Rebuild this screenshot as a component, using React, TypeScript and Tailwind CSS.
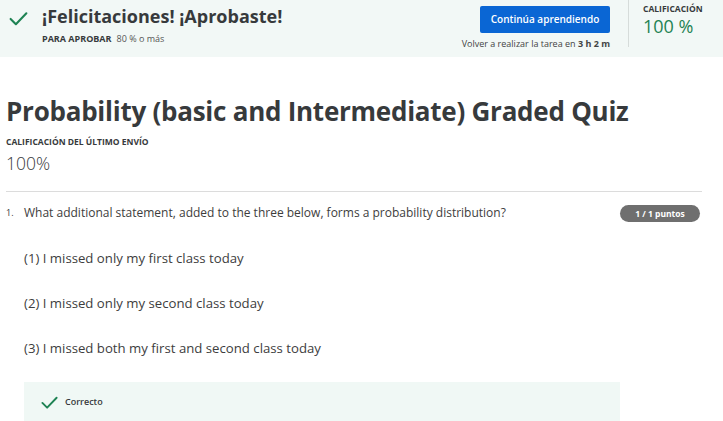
import React from 'react';

function Check({ className }: { className?: string }) {
  return (
    <svg viewBox="0 0 24 24" className={className} fill="none" stroke="currentColor" strokeWidth={2.4} strokeLinecap="round" strokeLinejoin="round">
      <path d="M3 12.5l6 6L21 6" />
    </svg>
  );
}

const options = [
  '(1) I missed only my first class today',
  '(2) I missed only my second class today',
  '(3) I missed both my first and second class today',
];

export default function App() {
  return (
    <div className="w-[723px] h-[421px] overflow-hidden bg-white text-[#373a3c] font-['Open_Sans',sans-serif]">
      {/* Banner */}
      <div className="h-[57px] bg-[#f2f8f6] flex">
        <div className="flex-1 flex pl-[8px] pt-[4px]">
          <Check className="w-[21px] h-[21px] text-[#1f8354] mt-[4px]" />
          <div className="ml-[13px]">
            <div className="text-[18px] font-bold leading-[24px]">¡Felicitaciones! ¡Aprobaste!</div>
            <div className="mt-[5px] text-[9px] leading-[12px]">
              <span className="font-bold">PARA APROBAR</span>
              <span className="ml-[5px] text-[#555]">80 % o más</span>
            </div>
          </div>
        </div>
        <div className="flex flex-col items-end pt-[6px] pr-[18px]">
          <button className="w-[130px] h-[27px] rounded-[2px] bg-[#0a66d4] text-white text-[10px] font-semibold">
            Continúa aprendiendo
          </button>
          <div className="mt-[5px] text-[9px] leading-[12px] text-[#444]">
            Volver a realizar la tarea en <span className="font-bold">3 h 2 m</span>
          </div>
        </div>
        <div className="w-px h-[47px] bg-[#d6dcda]" />
        <div className="w-[94px] pl-[14px] pt-[3px]">
          <div className="text-[8.5px] font-bold leading-[12px]">CALIFICACIÓN</div>
          <div className="text-[18px] text-[#1f8354] leading-[22px]">100 %</div>
        </div>
      </div>

      {/* Content */}
      <div className="px-[6px] pt-[37px]">
        <h1 className="text-[26px] font-bold leading-[34px] tracking-[-0.25px]">
          Probability (basic and Intermediate) Graded Quiz
        </h1>
        <div className="mt-[8px] text-[8.5px] font-bold leading-[12px]">CALIFICACIÓN DEL ÚLTIMO ENVÍO</div>
        <div className="mt-[2px] text-[17.5px] font-light leading-[26px]">100%</div>
        <div className="mt-[15px] mr-[15px] h-px bg-[#dcdcdc]" />

        <div className="mt-[13px] flex items-start">
          <span className="w-[18px] text-[9px] leading-[16px]">1.</span>
          <div className="flex-1 text-[12px] leading-[16px] text-[#3d3d3d]">
            What additional statement, added to the three below, forms a probability distribution?
          </div>
          <span className="mr-[17px] h-[17px] w-[80px] text-center rounded-full bg-[#6f6f6f] text-white text-[8.5px] font-bold leading-[17px]">
            1 / 1 puntos
          </span>
        </div>

        <div className="pl-[18px] mt-[27px] flex flex-col gap-[27px]">
          {options.map((o) => (
            <div key={o} className="text-[13.2px] leading-[18px] text-[#3d3d3d]">{o}</div>
          ))}
        </div>

        <div className="ml-[18px] mt-[25px] w-[596px] h-[40px] bg-[#f0f8f5] flex items-center pl-[16px]">
          <Check className="w-[19px] h-[19px] text-[#1f8354]" />
          <span className="ml-[6px] text-[9px] font-semibold">Correcto</span>
        </div>
      </div>
    </div>
  );
}
